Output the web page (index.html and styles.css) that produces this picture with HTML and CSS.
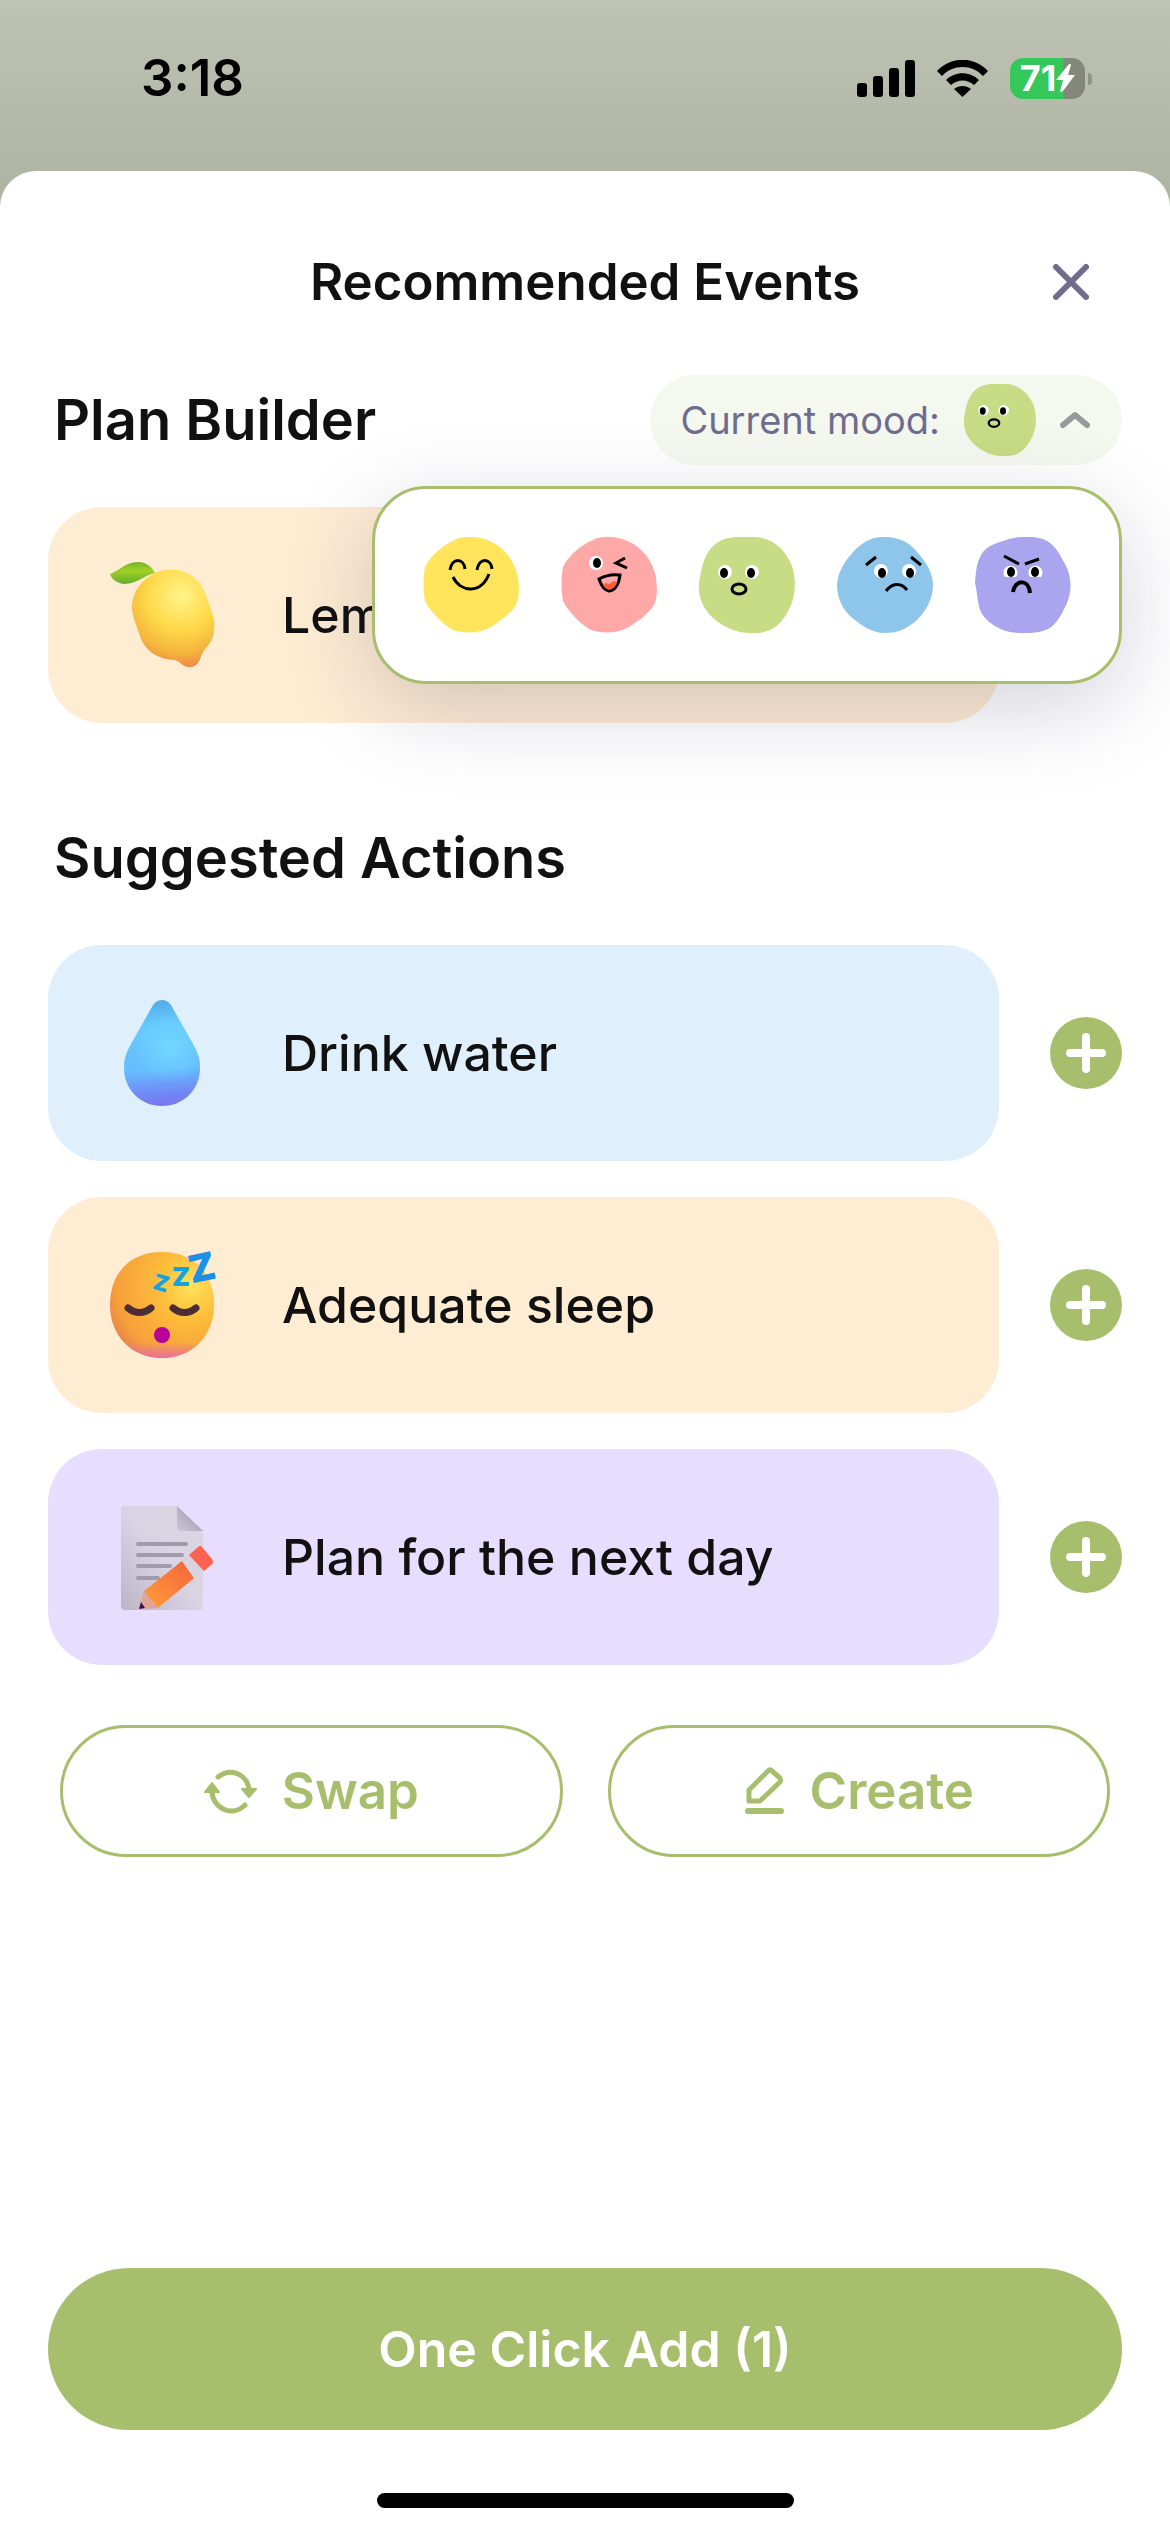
FILE: index.html
```html
<!doctype html>
<html lang="en">
<head>
	<meta charset="UTF-8">
	<meta name="viewport" content="width=device-width, initial-scale=1">
	<title>Recommended Events</title>
	<link rel="stylesheet" href="styles.css">
</head>
<body>
	<!-- shared mood faces -->
	<svg class="defs" aria-hidden="true">
		<symbol id="mood-happy" viewBox="0 0 96 96">
			<path fill="#ffe45c" d="M46 0C66-1 87 12 94 36C97 50 96 60 94 66C88 77 77 84 68 90C56 97 38 97 28 92C16 84 6 72 2 64C0 54 0 40 2 30C8 18 20 8 32 3C37 0 42 0 46 0Z"/>
			<g fill="none" stroke="#000" stroke-width="3">
				<path d="M27 33C29 20 41 21 42 32M54 33C56 20 68 21 69 32"/>
				<path d="M30 40C38 56 58 57 66 37"/>
			</g>
		</symbol>
		<symbol id="mood-wink" viewBox="0 0 96 96">
			<path fill="#ffa8a8" d="M46 0C66-1 87 12 94 36C97 50 96 60 94 66C88 77 77 84 68 90C56 97 38 97 28 92C16 84 6 72 2 64C0 54 0 40 2 30C8 18 20 8 32 3C37 0 42 0 46 0Z"/>
			<circle cx="35" cy="26" r="7" fill="#fff"/>
			<ellipse cx="36" cy="26" rx="4" ry="5"/>
			<path fill="none" stroke="#000" stroke-width="3" d="M64 21L55 26L66 31"/>
			<path fill="#ffa8a8" stroke="#000" stroke-width="3" d="M38 42C45 38 52 37 59 38C58 46 55 53 48 54C43 53 40 48 38 42Z"/>
			<path fill="#ff5c38" d="M42 48C45 44 48 49 51 45C53 43 55 44 56 46C54 50 52 52 48 53C45 52 43 50 42 48Z"/>
		</symbol>
		<symbol id="mood-calm" viewBox="0 0 96 96">
			<path fill="#c8db85" d="M40 0H56C74 1 87 13 93 29C97 42 97 56 92 68C85 84 76 95 58 96C42 97 28 93 14 81C4 71-1 61 0 47C2 33 4 20 13 10C21 2 30 0 40 0Z"/>
			<circle cx="26" cy="35" r="7" fill="#fff"/>
			<circle cx="53" cy="35" r="7" fill="#fff"/>
			<ellipse cx="25" cy="36" rx="4" ry="5"/>
			<ellipse cx="52" cy="36" rx="4" ry="5"/>
			<ellipse cx="40" cy="52" rx="7" ry="5" fill="none" stroke="#000" stroke-width="3"/>
		</symbol>
		<symbol id="mood-sad" viewBox="0 0 96 96">
			<path fill="#8ec5ea" d="M44 0C58-1 72 4 80 15C91 27 96 38 96 48C96 62 89 74 80 83C68 93 60 96 48 96C34 96 24 88 13 79C4 70 0 59 0 48C1 34 8 24 17 14C26 5 33 1 44 0Z"/>
			<path fill="none" stroke="#000" stroke-width="3" d="M29 28L39 20M74 20L84 28"/>
			<circle cx="44" cy="34" r="7" fill="#fff"/>
			<circle cx="72" cy="34" r="7" fill="#fff"/>
			<ellipse cx="45" cy="36" rx="4" ry="5"/>
			<ellipse cx="73" cy="36" rx="4" ry="5"/>
			<path fill="none" stroke="#000" stroke-width="3" d="M49 54C55 46 64 45 70 53"/>
		</symbol>
		<symbol id="mood-angry" viewBox="0 0 96 96">
			<path fill="#aba5ef" d="M34 2C46-1 58-1 68 2C80 7 84 16 90 27C97 40 97 54 92 66C86 79 80 91 68 94C56 97 38 97 28 93C16 88 6 80 4 69C2 60 2 54 0 46C1 36 1 27 6 18C12 8 22 6 34 2Z"/>
			<path fill="none" stroke="#000" stroke-width="3" d="M29 19L44 27M50 27L64 22"/>
			<path fill="#fff" d="M30 40A7 7 0 1 1 41 40ZM55 40A7 7 0 1 1 66 40Z"/>
			<ellipse cx="36" cy="35" rx="4" ry="5"/>
			<ellipse cx="60" cy="35" rx="4" ry="5"/>
			<path fill="none" stroke="#000" stroke-width="4" d="M38 55C40 42 54 42 55 56"/>
		</symbol>
		<symbol id="plus" viewBox="0 0 72 72">
			<circle cx="36" cy="36" r="36" fill="#a7bf6c"/>
			<path d="M20 36H52M36 20V52" stroke="#fff" stroke-width="8" stroke-linecap="round"/>
		</symbol>
	</svg>

	<div class="status">
		<span class="time">3:18</span>
		<div class="indicators">
			<svg class="signal" viewBox="0 0 58 37">
				<rect y="23" width="10" height="14" rx="3"/>
				<rect x="16" y="16" width="10" height="21" rx="3"/>
				<rect x="32" y="8" width="10" height="29" rx="3"/>
				<rect x="48" width="10" height="37" rx="3"/>
			</svg>
			<svg class="wifi" viewBox="0 0 51 37">
				<path d="M0 11C14-4 37-4 51 11L46 16C35 4 16 4 5 16Z"/>
				<path d="M9 20C18 11 33 11 42 20L37 25C30 19 21 19 14 25Z"/>
				<path d="M17 29C22 25 29 25 34 29L25.500 37Z"/>
			</svg>
			<div class="battery">
				<span>71</span>
				<svg viewBox="0 0 19 28"><path fill="#fff" d="M13 0L0 16H7L4 27Q5 29 7 27L19 11H12L15 1Q14-1 13 0Z"/></svg>
			</div>
		</div>
	</div>

	<main class="sheet">
		<header class="title">
			<h1>Recommended Events</h1>
			<button class="close" type="button" aria-label="Close">
				<svg viewBox="0 0 36 36"><path d="M3 3L33 33M33 3L3 33"/></svg>
			</button>
		</header>

		<section>
			<div class="head">
				<h2>Plan Builder</h2>
				<div class="mood">
					<button id="moodBtn" class="mood-btn" type="button" aria-expanded="true">
						<span>Current mood:</span>
						<svg class="mood-face"><use id="moodUse" href="#mood-calm"/></svg>
						<svg class="chevron" viewBox="0 0 30 18"><path d="M3 14L15 4L27 14"/></svg>
					</button>
					<div id="moodMenu" class="mood-menu">
						<button type="button" aria-label="Happy"><svg><use href="#mood-happy"/></svg></button>
						<button type="button" aria-label="Playful"><svg><use href="#mood-wink"/></svg></button>
						<button type="button" aria-label="Calm"><svg><use href="#mood-calm"/></svg></button>
						<button type="button" aria-label="Sad"><svg><use href="#mood-sad"/></svg></button>
						<button type="button" aria-label="Angry"><svg><use href="#mood-angry"/></svg></button>
					</div>
				</div>
			</div>
			<ul class="list">
				<li>
					<div class="card orange">
						<svg class="icon" viewBox="-2 -1 108 108">
							<defs>
								<radialGradient id="lemon" gradientUnits="userSpaceOnUse" cx="71" cy="34" r="76">
									<stop offset="0" stop-color="#fff58a"/>
									<stop offset=".45" stop-color="#ffd848"/>
									<stop offset=".75" stop-color="#f4b53d"/>
									<stop offset="1" stop-color="#ee7a48"/>
								</radialGradient>
								<linearGradient id="leaf" x1="0" y1="0" x2="0" y2="1">
									<stop offset="0" stop-color="#6fb52d"/>
									<stop offset=".4" stop-color="#a2d125"/>
									<stop offset="1" stop-color="#62ab30"/>
								</linearGradient>
							</defs>
							<path fill="url(#leaf)" d="M0 12C9 9 15 0 28 0C37 0 43 6 45 11C35 13 27 22 14 22C6 21 1 16 0 12Z"/>
							<path fill="url(#lemon)" d="M45 11C60 4 80 7 91 23C97 33 99 43 103 54C106 66 104 77 97 85C88 94 92 104 80 105C73 106 71 99 64 98C50 97 38 92 31 77C28 66 22 56 22 44C23 28 32 18 45 11Z"/>
						</svg>
						<span>Lemon water</span>
					</div>
				</li>
			</ul>
		</section>

		<section class="suggested">
			<div class="head">
				<h2>Suggested Actions</h2>
			</div>
			<ul class="list">
				<li>
					<div class="card blue">
						<svg class="icon" viewBox="0 0 108 108">
							<defs>
								<linearGradient id="drop" x1=".45" y1="0" x2=".5" y2="1">
									<stop offset="0" stop-color="#53ade8"/>
									<stop offset=".25" stop-color="#66c9ff"/>
									<stop offset=".65" stop-color="#66bdff"/>
									<stop offset=".9" stop-color="#7284f4"/>
									<stop offset="1" stop-color="#7a78ef"/>
								</linearGradient>
								<radialGradient id="glow" gradientUnits="userSpaceOnUse" cx="62" cy="48" r="36">
									<stop offset="0" stop-color="#74dcff" stop-opacity=".8"/>
									<stop offset="1" stop-color="#74dcff" stop-opacity="0"/>
								</radialGradient>
							</defs>
							<path fill="url(#drop)" d="M54 1C58 1 61 3 63 6L85 45C90 54 92 60 92 69C92 91 75 107 54 107S16 91 16 69C16 60 18 54 23 45L45 6C47 3 50 1 54 1Z"/>
							<path fill="url(#glow)" d="M54 1C58 1 61 3 63 6L85 45C90 54 92 60 92 69C92 91 75 107 54 107S16 91 16 69C16 60 18 54 23 45L45 6C47 3 50 1 54 1Z"/>
						</svg>
						<span>Drink water</span>
					</div>
					<button class="add" type="button" aria-label="Add Drink water"><svg><use href="#plus"/></svg></button>
				</li>
				<li>
					<div class="card orange">
						<svg class="icon" viewBox="0 0 108 108">
							<defs>
								<radialGradient id="face" gradientUnits="userSpaceOnUse" cx="84" cy="34" r="96">
									<stop offset="0" stop-color="#ffe35a"/>
									<stop offset=".35" stop-color="#fdbd3a"/>
									<stop offset=".8" stop-color="#f69f3a"/>
									<stop offset="1" stop-color="#e07a55"/>
								</radialGradient>
								<linearGradient id="chin" x1="0" y1="0" x2="0" y2="1">
									<stop offset=".85" stop-color="#ea6fa0" stop-opacity="0"/>
									<stop offset="1" stop-color="#ea6fa0"/>
								</linearGradient>
							</defs>
							<path fill="url(#face)" d="M54 1C86 1 106 22 106 54C106 85 84 107 54 107S2 85 2 54C2 22 22 1 54 1Z"/>
							<path fill="url(#chin)" d="M54 1C86 1 106 22 106 54C106 85 84 107 54 107S2 85 2 54C2 22 22 1 54 1Z"/>
							<path fill="none" stroke="#4d2d35" stroke-width="7" stroke-linecap="round" d="M20 57C27 63 36 63 43 57M65 57C72 63 81 63 88 57"/>
							<circle cx="54" cy="84" r="8" fill="#b8009a"/>
							<g class="zzz">
								<text x="53" y="40" font-size="22" fill="#14a3e0" transform="rotate(16 53 33)">Z</text>
								<text x="73" y="35" font-size="26" fill="#14a3e0">Z</text>
								<text x="94" y="30" font-size="38" fill="#1c8fe8" transform="rotate(-12 94 17)">Z</text>
							</g>
						</svg>
						<span>Adequate sleep</span>
					</div>
					<button class="add" type="button" aria-label="Add Adequate sleep"><svg><use href="#plus"/></svg></button>
				</li>
				<li>
					<div class="card purple">
						<svg class="icon" viewBox="0 0 108 108">
							<defs>
								<linearGradient id="paper" x1="1" y1="0" x2="0" y2="1">
									<stop offset="0" stop-color="#dcd6e2"/>
									<stop offset=".5" stop-color="#d9d3e3"/>
									<stop offset="1" stop-color="#bcb5c6"/>
								</linearGradient>
								<linearGradient id="fold" x1="1" y1="0" x2="0" y2="1">
									<stop offset=".4" stop-color="#aea7b8"/>
									<stop offset="1" stop-color="#cdc6d6"/>
								</linearGradient>
								<linearGradient id="wood" x1="1" y1="0" x2="0" y2="1">
									<stop offset="0" stop-color="#f4623c"/>
									<stop offset="1" stop-color="#ff9f38"/>
								</linearGradient>
							</defs>
							<path fill="url(#paper)" d="M16 3H69L95 28V103Q95 107 91 107H17Q13 107 13 103V6Q13 3 16 3Z"/>
							<path fill="url(#fold)" d="M69 3L95 28H73Q69 28 69 24Z"/>
							<path stroke="#a09bac" stroke-width="4" stroke-linecap="round" d="M30 41H78M30 52H74M30 63H62M30 75H50"/>
							<path fill="#e0a597" d="M31 106L36 88L50 105Z"/>
							<path fill="#3b0f4d" d="M31 106L33 99L37 105Z"/>
							<path fill="url(#wood)" d="M36 88L74 58L86 75L50 105Z"/>
							<path fill="#d9d3e0" d="M74 58L81 52L96 68L86 75Z"/>
							<path fill="#fb6350" d="M81 52L90 44Q92 42 94 44L104 56Q106 59 104 61L96 68Z"/>
						</svg>
						<span>Plan for the next day</span>
					</div>
					<button class="add" type="button" aria-label="Add Plan for the next day"><svg><use href="#plus"/></svg></button>
				</li>
			</ul>
		</section>

		<div class="tools">
			<button type="button">
				<svg class="swap" viewBox="0 0 54 45">
					<path fill="none" stroke="#a7bf6c" stroke-width="5" stroke-linecap="round" d="M14 8C28-3 45 7 45 22M8 22C8 39 28 49 41 36"/>
					<path fill="#a7bf6c" stroke="#a7bf6c" stroke-width="2" stroke-linejoin="round" d="M38 20H52L45 28ZM1 23H15L8 14Z"/>
				</svg>
				Swap
			</button>
			<button type="button">
				<svg class="create" viewBox="0 0 42 48">
					<path fill="none" stroke="#a7bf6c" stroke-width="5" stroke-linejoin="round" d="M5 34V23L24 4Q26 2 28 4L36 11Q37 13 36 15L16 34Z"/>
					<path stroke="#a7bf6c" stroke-width="6" stroke-linecap="round" d="M4 44H37"/>
				</svg>
				Create
			</button>
		</div>

		<footer class="bottom">
			<button class="submit" type="button">One Click Add (1)</button>
			<div class="home"></div>
		</footer>
	</main>

	<script>
		var oBtn = document.getElementById('moodBtn');
		var oMenu = document.getElementById('moodMenu');
		var oUse = document.getElementById('moodUse');
		var aMood = oMenu.getElementsByTagName('button');

		oBtn.onclick = function(){
			toggleMenu(oMenu.hidden);
		};

		for(var i=0; i<aMood.length; i++){
			aMood[i].onclick = function(){
				oUse.setAttribute('href', this.querySelector('use').getAttribute('href'));
				toggleMenu(false);
			};
		}

		function toggleMenu(show){
			oMenu.hidden = !show;
			oBtn.setAttribute('aria-expanded', show);
		}
	</script>
</body>
</html>
```
FILE: styles.css
```css
*{
	margin: 0;
	padding: 0;
	box-sizing: border-box;
}

li{
	list-style: none;
}

svg{
	display: block;
	flex: none;
}

body{
	display: flex;
	flex-direction: column;
	min-height: 100vh;
	background: linear-gradient(#bec3b4, #afb4a3 180px);
	color: #111;
	font-family: Inter, "Liberation Sans", sans-serif;
	font-size: 50px;
	line-height: 72px;
}

button{
	border: 0;
	background: none;
	color: inherit;
	font: inherit;
	cursor: pointer;
}

.defs{
	position: absolute;
	width: 0;
	height: 0;
}

/* status bar */
.status{
	display: flex;
	justify-content: space-between;
	align-items: center;
	height: 171px;
	padding: 0 78px 15px 141px;
	color: #000;
}

.time{
	font-size: 51px;
	font-weight: 600;
}

.indicators{
	display: flex;
	align-items: center;
	gap: 22px;
}

.signal{
	width: 58px;
	height: 37px;
}

.wifi{
	width: 51px;
	height: 37px;
}

.battery{
	position: relative;
	display: flex;
	justify-content: center;
	align-items: center;
	width: 75px;
	height: 41px;
	margin-right: 7px;
	border-radius: 13px;
	background: linear-gradient(90deg, #34c759 71%, #84877b 71%);
	color: #fff;
	font-size: 36px;
	font-weight: 700;
	line-height: 41px;
}

.battery svg{
	width: 19px;
	height: 28px;
}

.battery::after{
	content: "";
	position: absolute;
	top: 15px;
	right: -7px;
	width: 4px;
	height: 12px;
	border-radius: 0 4px 4px 0;
	background: #8f9286;
}

/* sheet */
.sheet{
	flex: 1;
	display: flex;
	flex-direction: column;
	padding: 75px 48px 24px;
	border-radius: 36px 36px 0 0;
	background: #fff;
}

.title{
	display: grid;
	grid-template-columns: 72px 1fr 72px;
	align-items: center;
	padding-right: 15px;
	padding-left: 15px;
	margin-bottom: 57px;
}

.title h1{
	grid-column: 2;
	font-size: 51px;
	font-weight: 600;
	text-align: center;
}

.close{
	display: flex;
	justify-content: center;
	align-items: center;
	height: 72px;
}

.close svg{
	width: 36px;
	height: 36px;
}

.close path, .chevron path{
	fill: none;
	stroke: #6f6c8f;
	stroke-width: 6;
	stroke-linecap: round;
	stroke-linejoin: round;
}

.head{
	display: flex;
	justify-content: space-between;
	align-items: center;
	min-height: 90px;
	padding-left: 6px;
}

.head h2{
	font-size: 56px;
	font-weight: 600;
}

.mood{
	position: relative;
}

.mood-btn{
	display: flex;
	align-items: center;
	height: 90px;
	padding: 0 32px 0 30px;
	border-radius: 45px;
	background: #f5f8ef;
	color: #6f6c8f;
	font-size: 38px;
}

.mood-face{
	width: 72px;
	height: 72px;
	margin: 0 24px;
}

.chevron{
	width: 30px;
	height: 18px;
}

.chevron path{
	stroke: #97999a;
}

.mood-menu{
	position: absolute;
	top: 111px;
	right: 0;
	z-index: 1;
	display: flex;
	gap: 42px;
	padding: 48px;
	border: 3px solid #a7bf6c;
	border-radius: 54px;
	background: #fff;
	box-shadow: 0 24px 90px rgba(40, 35, 80, .2);
}

.mood-menu[hidden]{
	display: none;
}

.mood-menu svg{
	width: 96px;
	height: 96px;
}

/* cards */
.list{
	display: grid;
	gap: 36px;
	margin-top: 42px;
}

.list li{
	display: grid;
	grid-template-columns: 1fr 72px;
	align-items: center;
	gap: 51px;
}

.card{
	display: flex;
	align-items: center;
	gap: 66px;
	height: 216px;
	padding: 0 60px;
	border-radius: 54px;
	font-weight: 500;
}

.orange{
	background: #feecd3;
}

.blue{
	background: #dfeffc;
}

.purple{
	background: #e7deff;
}

.icon{
	width: 108px;
	height: 108px;
	overflow: visible;
}

.zzz{
	font-weight: 900;
	text-anchor: middle;
}

.add svg{
	width: 72px;
	height: 72px;
}

.suggested{
	margin-top: 90px;
}

.tools{
	display: grid;
	grid-template-columns: 1fr 1fr;
	gap: 45px;
	padding: 0 12px;
	margin: 60px 0;
}

.tools button{
	display: flex;
	justify-content: center;
	align-items: center;
	gap: 24px;
	height: 132px;
	border: 3px solid #a7bf6c;
	border-radius: 66px;
	color: #a7bf6c;
	font-size: 51px;
	font-weight: 600;
}

.swap{
	width: 54px;
	height: 45px;
}

.create{
	width: 42px;
	height: 48px;
}

.bottom{
	margin-top: auto;
}

.submit{
	display: block;
	width: 100%;
	height: 162px;
	border-radius: 81px;
	background: #a7bf6c;
	color: #fff;
	font-weight: 600;
}

.home{
	width: 417px;
	height: 15px;
	margin: 63px auto 0;
	border-radius: 8px;
	background: #000;
}
```
